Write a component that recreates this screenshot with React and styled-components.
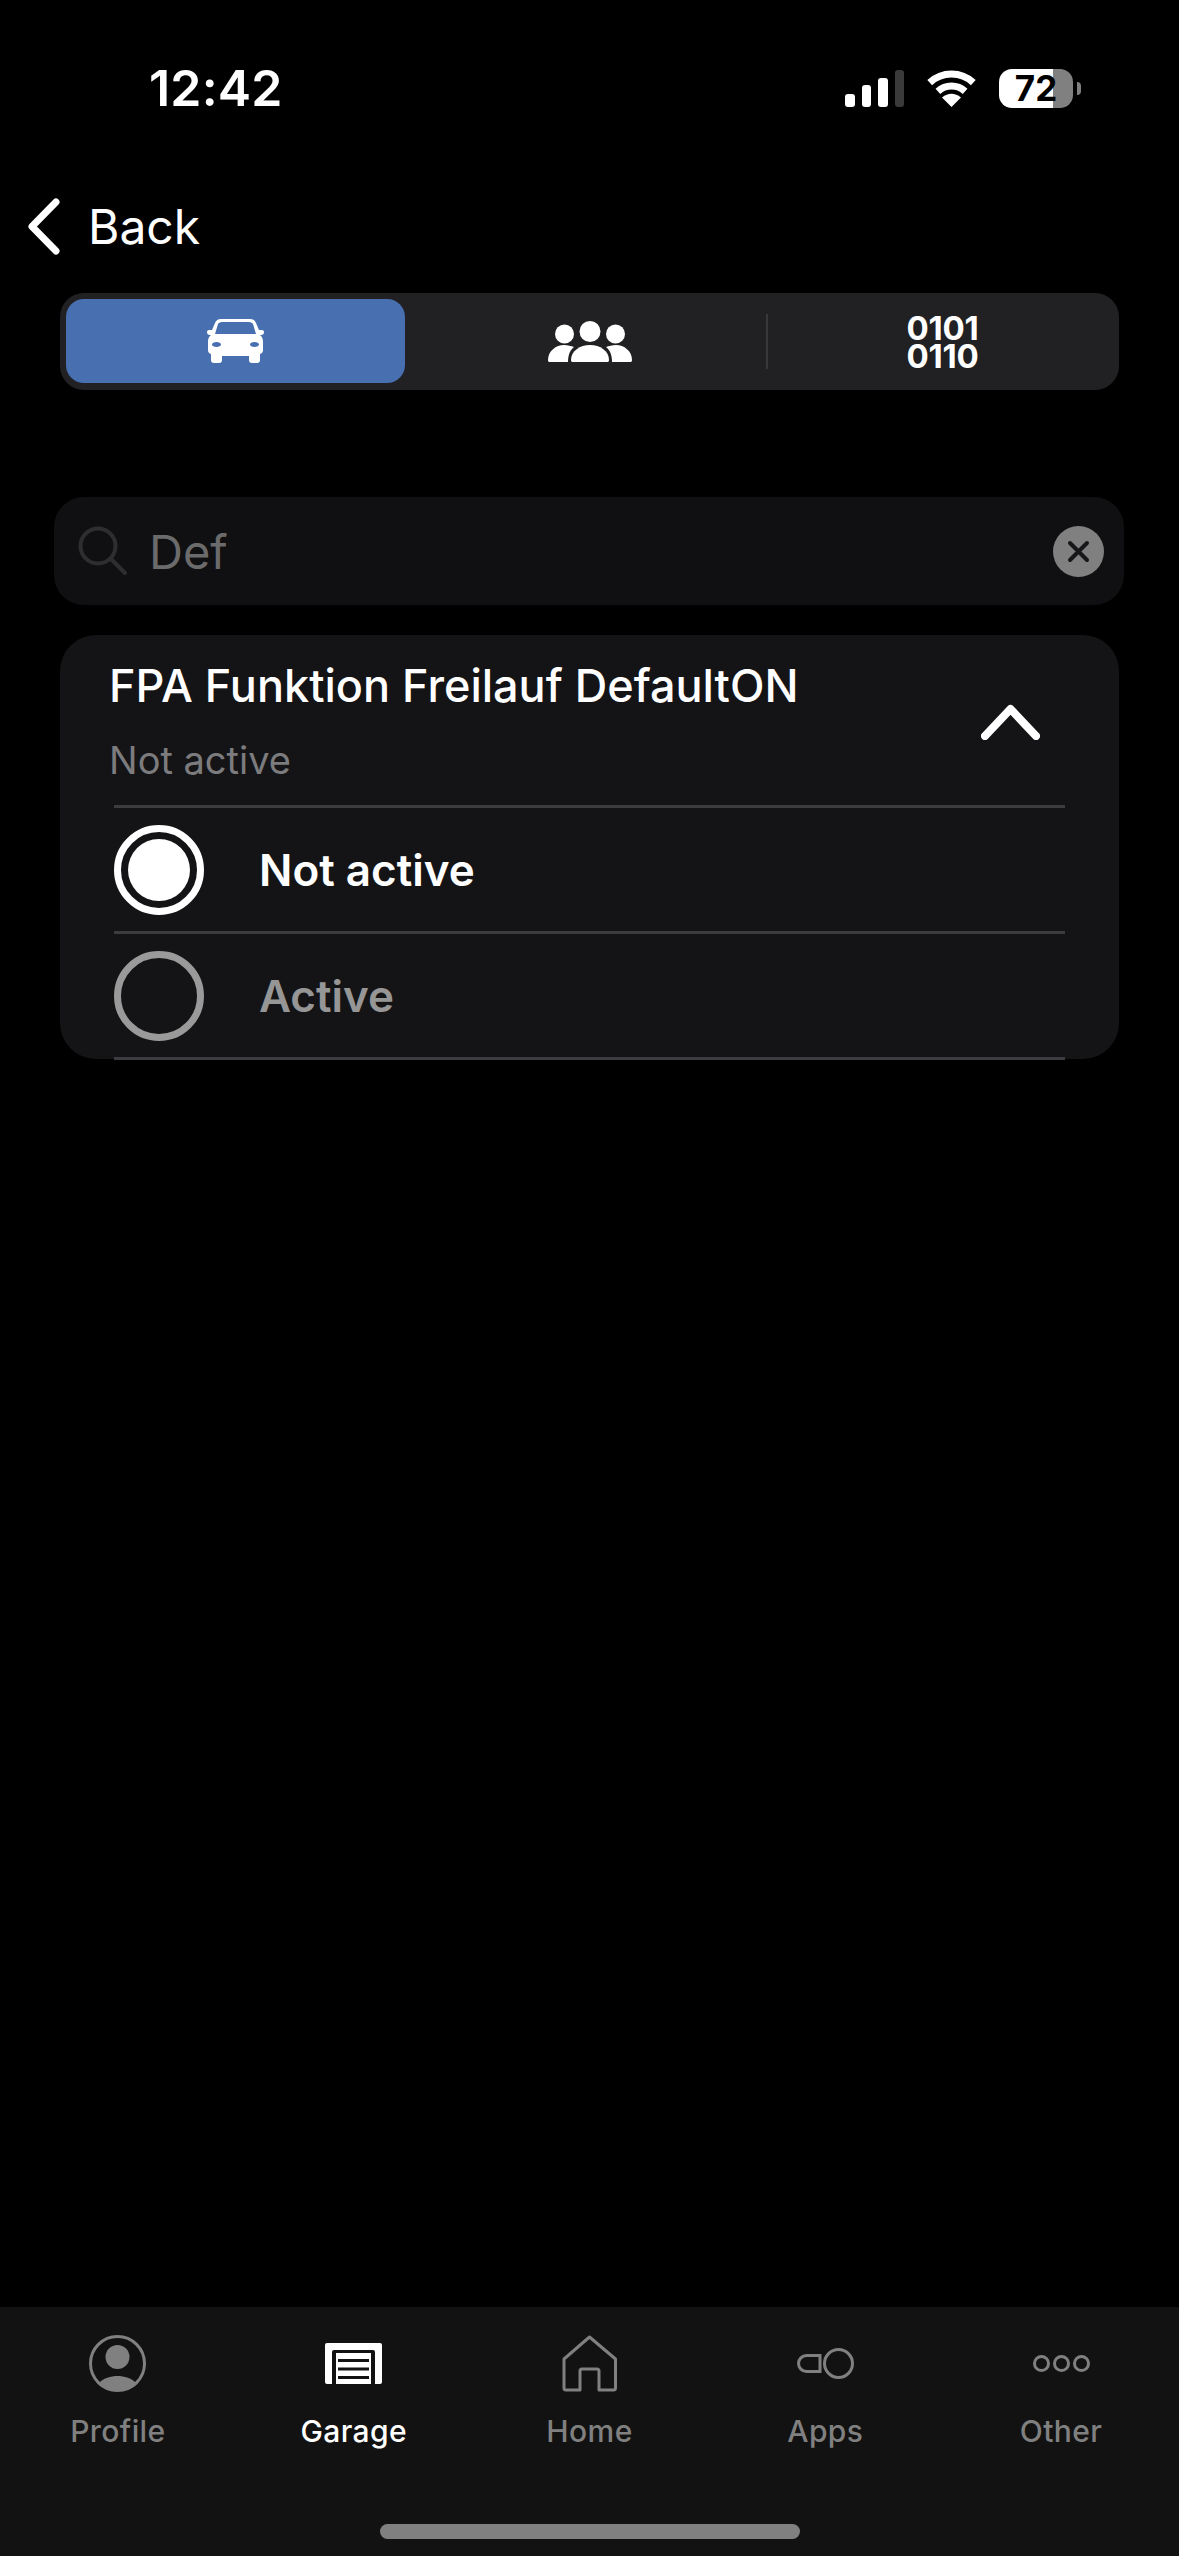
import React from 'react';
import styled, { createGlobalStyle } from 'styled-components';

const GlobalStyle = createGlobalStyle`
  html, body {
    margin: 0;
    padding: 0;
    background: #000;
  }
  * {
    box-sizing: border-box;
  }
`;

const Page = styled.div`
  width: 1179px;
  height: 2556px;
  display: flex;
  flex-direction: column;
  background: #000;
  color: #fff;
  font-family: Inter, "Liberation Sans", sans-serif;
  overflow: hidden;
`;

const StatusBar = styled.div`
  height: 176px;
  flex: none;
  display: flex;
  align-items: center;
  justify-content: space-between;
  padding: 0 98px 0 149px;
`;

const Time = styled.div`
  font-size: 50px;
  font-weight: 600;
  letter-spacing: 0.2px;
`;

const StatusIcons = styled.div`
  display: flex;
  align-items: center;
`;

const Signal = styled.div`
  display: flex;
  align-items: flex-end;
  gap: 7px;
  height: 37px;
  margin-right: 22px;
`;

const SignalBar = styled.div`
  width: 9.5px;
  height: ${(p) => p.$h}px;
  border-radius: 3px;
  background: ${(p) => (p.$off ? '#3a3a3a' : '#fff')};
`;

const Battery = styled.div`
  width: 74px;
  height: 39px;
  margin-left: 22px;
  border-radius: 13px;
  background: linear-gradient(90deg, #fff 73%, #808080 73%);
  color: #000;
  font-size: 35px;
  font-weight: 700;
  display: flex;
  align-items: center;
  justify-content: center;
`;

const BatteryNub = styled.div`
  width: 4px;
  height: 13px;
  margin-left: 4px;
  border-radius: 0 4px 4px 0;
  background: #808080;
`;

const BackRow = styled.div`
  height: 117px;
  flex: none;
  padding: 0 0 17px 28px;
  display: flex;
  align-items: center;
  gap: 28px;
  font-size: 48px;
  font-weight: 400;
`;

const Segments = styled.div`
  flex: none;
  height: 97px;
  margin: 0 60px;
  border-radius: 24px;
  background: #212123;
  display: grid;
  grid-template-columns: repeat(3, 1fr);
`;

const Segment = styled.div`
  display: flex;
  align-items: center;
  justify-content: center;
  margin: 6px ${(p) => (p.$active ? 8 : 6)}px 7px ${(p) => (p.$active ? 6 : 7)}px;
  border-radius: 18px;
  background: ${(p) => (p.$active ? '#4870b0' : 'transparent')};
`;

const SegmentDivider = styled.div`
  position: relative;
  display: flex;
  flex-direction: column;
  align-items: center;
  justify-content: center;
  &::before {
    content: '';
    position: absolute;
    left: 0;
    top: 21px;
    bottom: 21px;
    width: 2px;
    background: #38383a;
  }
`;

const BinaryLine = styled.div`
  font-size: 33px;
  font-weight: 700;
  line-height: 28px;
  height: 28px;
  letter-spacing: -0.3px;
`;

const SearchBox = styled.div`
  flex: none;
  height: 108px;
  margin: 107px 55px 0 54px;
  padding: 0 20px 0 24px;
  border-radius: 30px;
  background: #101012;
  display: flex;
  align-items: center;
`;

const SearchText = styled.div`
  flex: 1;
  margin-left: 21px;
  font-size: 47px;
  color: #6b6b6c;
`;

const ClearButton = styled.div`
  width: 51px;
  height: 51px;
  border-radius: 50%;
  background: #808080;
  display: flex;
  align-items: center;
  justify-content: center;
`;

const Card = styled.div`
  flex: none;
  height: 424px;
  margin: 30px 60px 0;
  border-radius: 36px;
  background: #141416;
`;

const CardHeader = styled.div`
  height: 173px;
  margin: 0 54px;
  border-bottom: 3px solid #3c3c3e;
  position: relative;
`;

const CardHeaderText = styled.div`
  margin-left: -5px;
  padding-top: 26px;
`;

const CardTitle = styled.div`
  font-size: 45px;
  font-weight: 550;
  line-height: 50px;
`;

const CardValue = styled.div`
  margin-top: 27px;
  font-size: 38px;
  line-height: 44px;
  color: #7c7c7f;
`;

const Collapse = styled.svg`
  position: absolute;
  right: 25px;
  top: 69px;
`;

const OptionRow = styled.div`
  height: 126px;
  margin: 0 54px;
  border-bottom: 3px solid #3c3c3e;
  display: flex;
  align-items: center;
  gap: 55px;
`;

const Radio = styled.div`
  width: 90px;
  height: 90px;
  border-radius: 50%;
  border: 7px solid ${(p) => (p.$checked ? '#fff' : '#9a9a9a')};
  padding: 7px;
  &::after {
    content: '';
    display: ${(p) => (p.$checked ? 'block' : 'none')};
    width: 100%;
    height: 100%;
    border-radius: 50%;
    background: #fff;
  }
`;

const OptionLabel = styled.div`
  font-size: 44px;
  font-weight: 600;
  color: ${(p) => (p.$checked ? '#fff' : '#969696')};
`;

const BottomNav = styled.div`
  margin-top: auto;
  flex: none;
  height: 249px;
  background: #121212;
  padding-top: 28px;
  display: flex;
  flex-direction: column;
`;

const NavGrid = styled.div`
  display: grid;
  grid-template-columns: repeat(5, 1fr);
`;

const NavItem = styled.div`
  display: flex;
  flex-direction: column;
  align-items: center;
  color: ${(p) => (p.$active ? '#fff' : '#808080')};
`;

const NavIcon = styled.div`
  height: 57px;
  display: flex;
  align-items: center;
  justify-content: center;
`;

const NavLabel = styled.div`
  margin-top: 21px;
  font-size: 30px;
  line-height: 36px;
  font-weight: 500;
  letter-spacing: 0.4px;
`;

const HomeBar = styled.div`
  width: 420px;
  height: 15px;
  margin: 75px auto 0;
  border-radius: 8px;
  background: #808080;
`;

const WifiIcon = () => (
  <svg width="51" height="37" viewBox="0 0 51 37" fill="none" stroke="#fff" strokeWidth="7">
    <path d="M3.7 12.6A32 32 0 0 1 47.3 12.6" />
    <path d="M11.9 21.4A20 20 0 0 1 39.1 21.4" />
    <path d="M25.5 37L16 27.5Q25.5 20 35 27.5Z" fill="#fff" stroke="none" />
  </svg>
);

const CarIcon = () => (
  <svg width="57" height="44" viewBox="0 0 57 44" fill="#fff">
    <path
      fillRule="evenodd"
      d="M14 0H43C46 0 48 1.5 49 4L52 11H55C56.5 11 57 12 57 13C57 15 56 16 54 16H53C55.5 18 56 20 56 23V31C56 33 55 34.5 53 35V41C53 43 52 44 50 44H45C43 44 42 43 42 41V37H15V41C15 43 14 44 12 44H7C5 44 4 43 4 41V35C2 34.5 1 33 1 31V23C1 20 1.5 18 4 16H3C1 16 0 15 0 13C0 12 .5 11 2 11H5L8 4C9 1.5 11 0 14 0ZM15 3C13 3 11.500 4 11 5L8 15H49L46 5C45.500 4 44 3 42 3ZM9.500 23C7 23 5 24 5 25.500C5 27 7 28 9.500 28C12 28 14 27 14 25.500C14 24 12 23 9.500 23ZM47.500 23C45 23 43 24 43 25.500C43 27 45 28 47.500 28C50 28 52 27 52 25.500C52 24 50 23 47.500 23Z"
    />
  </svg>
);

const PeopleIcon = () => (
  <svg width="84" height="41" viewBox="0 0 84 41" fill="#fff">
    <circle cx="16.500" cy="13" r="9.500" />
    <circle cx="42" cy="10.500" r="10.500" />
    <circle cx="67.500" cy="13" r="9.500" />
    <path d="M23 39C23 30 32 24 42 24C52 24 61 30 61 39C61 40.500 60.500 41 59 41H25C23.500 41 23 40.500 23 39Z" />
    <path d="M0 39C0 30 8 24 16 24C20 24 23 25 26 26C22 29 20 34 20 41H2C.5 41 0 40.500 0 39Z" />
    <path d="M84 39C84 30 76 24 68 24C64 24 61 25 58 26C62 29 64 34 64 41H82C83.500 41 84 40.500 84 39Z" />
  </svg>
);

const SearchIcon = () => (
  <svg width="50" height="50" viewBox="0 0 50 50" fill="none" stroke="#2e2e30" strokeWidth="4" strokeLinecap="round">
    <circle cx="20" cy="20" r="17.500" />
    <path d="M33 33L47 47" />
  </svg>
);

const ProfileIcon = () => (
  <svg width="57" height="57" viewBox="0 0 57 57" fill="none" stroke="currentColor" strokeWidth="3">
    <circle cx="28.500" cy="28.500" r="27" />
    <circle cx="28.500" cy="22" r="12" fill="currentColor" stroke="none" />
    <path d="M9 49C14 43 22 41 28.500 41C35 41 43 43 48 49C43 54 35 56 28.500 56C22 56 14 54 9 49Z" fill="currentColor" stroke="none" />
  </svg>
);

const GarageIcon = () => (
  <svg width="57" height="41" viewBox="0 0 57 41">
    <path d="M2 0H55A2 2 0 0 1 57 2V39A2 2 0 0 1 55 41H2A2 2 0 0 1 0 39V2A2 2 0 0 1 2 0Z" fill="#fff" />
    <path d="M9 7H48A2 2 0 0 1 50 9V41H7V9A2 2 0 0 1 9 7Z" fill="#121212" />
    <rect x="11" y="10" width="35" height="31" fill="#fff" />
    <path d="M13 17.500H44M13 26H44M13 34.500H44" stroke="#121212" strokeWidth="3" />
  </svg>
);

const HomeIcon = () => (
  <svg width="55" height="57" viewBox="0 0 55 57" fill="none" stroke="currentColor" strokeWidth="3" strokeLinejoin="round">
    <path d="M27.500 2L53.500 24V53A2 2 0 0 1 51.500 55H37V36A2 2 0 0 0 35 34H20A2 2 0 0 0 18 36V55H4A2 2 0 0 1 2 53V24Z" />
  </svg>
);

const AppsIcon = () => (
  <svg width="57" height="31" viewBox="0 0 57 31" fill="none" stroke="currentColor" strokeWidth="3">
    <circle cx="41.500" cy="15.500" r="14" />
    <path d="M23 7.500H9.500A8 8 0 0 0 9.500 23.500H23Z" />
  </svg>
);

const OtherIcon = () => (
  <svg width="57" height="17" viewBox="0 0 57 17" fill="none" stroke="currentColor" strokeWidth="3">
    <circle cx="8.500" cy="8.500" r="7" />
    <circle cx="28.500" cy="8.500" r="7" />
    <circle cx="48.500" cy="8.500" r="7" />
  </svg>
);

const navItems = [
  { label: 'Profile', icon: <ProfileIcon /> },
  { label: 'Garage', icon: <GarageIcon />, active: true },
  { label: 'Home', icon: <HomeIcon /> },
  { label: 'Apps', icon: <AppsIcon /> },
  { label: 'Other', icon: <OtherIcon /> },
];

function App() {
  return (
    <Page>
      <GlobalStyle />
      <StatusBar>
        <Time>12:42</Time>
        <StatusIcons>
          <Signal>
            <SignalBar $h={13} />
            <SignalBar $h={22} />
            <SignalBar $h={29} />
            <SignalBar $h={37} $off />
          </Signal>
          <WifiIcon />
          <Battery>72</Battery>
          <BatteryNub />
        </StatusIcons>
      </StatusBar>

      <BackRow>
        <svg width="32" height="57" viewBox="0 0 32 57" fill="none" stroke="#fff" strokeWidth="7" strokeLinecap="round" strokeLinejoin="round">
          <path d="M28 4L4 28.500L28 53" />
        </svg>
        Back
      </BackRow>

      <Segments>
        <Segment $active><CarIcon /></Segment>
        <Segment><PeopleIcon /></Segment>
        <SegmentDivider>
          <BinaryLine>0101</BinaryLine>
          <BinaryLine>0110</BinaryLine>
        </SegmentDivider>
      </Segments>

      <SearchBox>
        <SearchIcon />
        <SearchText>Def</SearchText>
        <ClearButton>
          <svg width="23" height="23" viewBox="0 0 23 23" stroke="#17171a" strokeWidth="4" strokeLinecap="round">
            <path d="M3 3L20 20M20 3L3 20" />
          </svg>
        </ClearButton>
      </SearchBox>

      <Card>
        <CardHeader>
          <CardHeaderText>
            <CardTitle>FPA Funktion Freilauf DefaultON</CardTitle>
            <CardValue>Not active</CardValue>
          </CardHeaderText>
          <Collapse width="59" height="36" viewBox="0 0 59 36" fill="none" stroke="#fff" strokeWidth="8" strokeLinecap="round" strokeLinejoin="round">
            <path d="M4 32L29.500 5L55 32" />
          </Collapse>
        </CardHeader>
        <OptionRow>
          <Radio $checked />
          <OptionLabel $checked>Not active</OptionLabel>
        </OptionRow>
        <OptionRow>
          <Radio />
          <OptionLabel>Active</OptionLabel>
        </OptionRow>
      </Card>

      <BottomNav>
        <NavGrid>
          {navItems.map((item) => (
            <NavItem key={item.label} $active={item.active}>
              <NavIcon>{item.icon}</NavIcon>
              <NavLabel>{item.label}</NavLabel>
            </NavItem>
          ))}
        </NavGrid>
        <HomeBar />
      </BottomNav>
    </Page>
  );
}

export default App;
